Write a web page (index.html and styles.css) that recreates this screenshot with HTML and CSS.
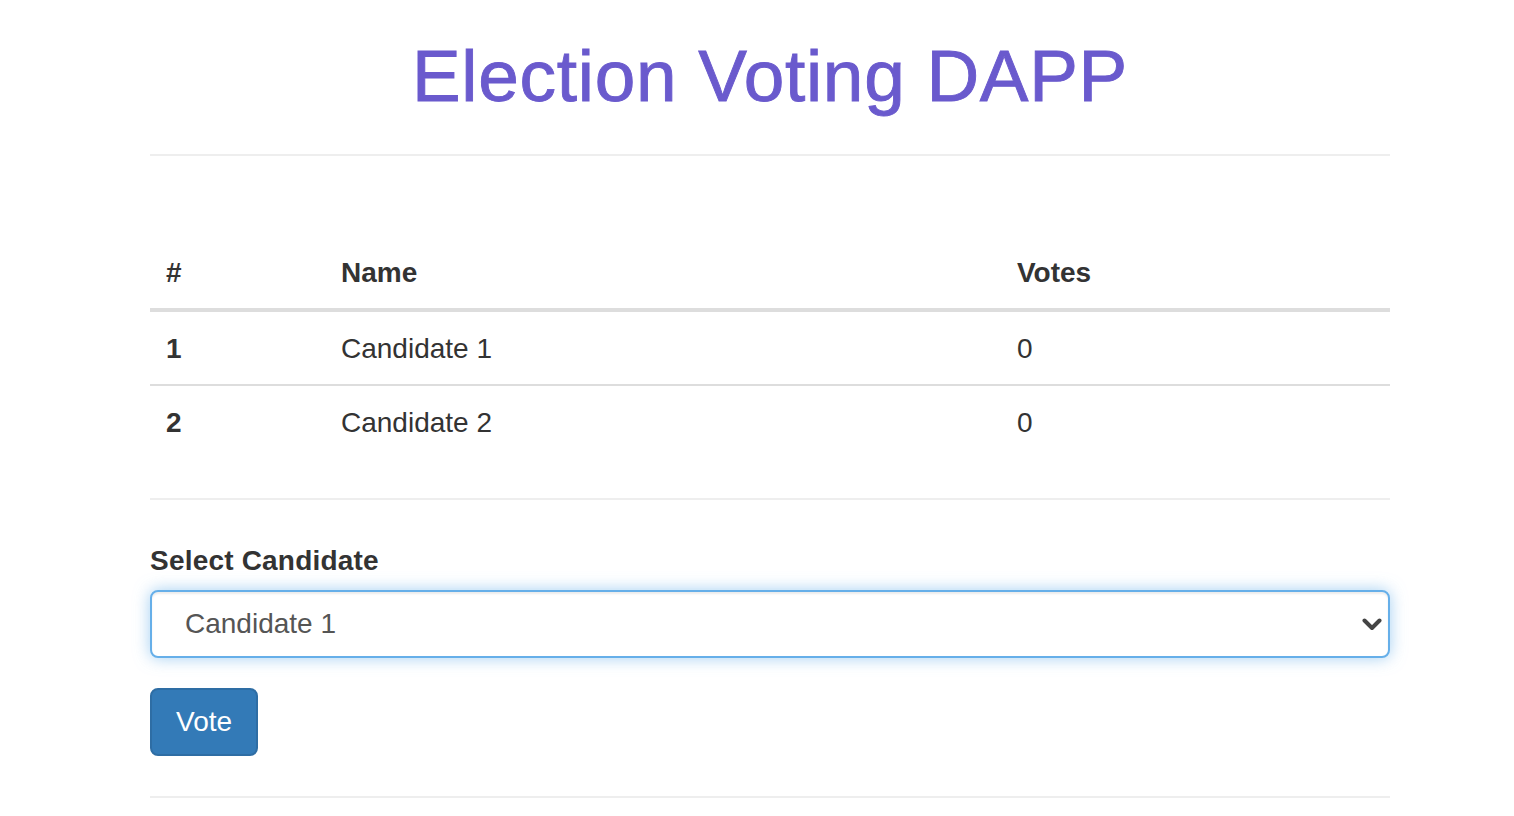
FILE: index.html
```html
<!DOCTYPE html>
<html lang="en">
<head>
<meta charset="utf-8">
<title>Election Voting DAPP</title>
<link rel="stylesheet" href="styles.css">
</head>
<body>
<div class="container">
  <h1 class="title">Election Voting DAPP</h1>
  <hr class="rule rule-title">
  <table class="table">
    <thead>
      <tr>
        <th class="col-id">#</th>
        <th class="col-name">Name</th>
        <th class="col-votes">Votes</th>
      </tr>
    </thead>
    <tbody>
      <tr>
        <th class="cell-id">1</th>
        <td>Candidate 1</td>
        <td>0</td>
      </tr>
      <tr class="row-next">
        <th class="cell-id">2</th>
        <td>Candidate 2</td>
        <td>0</td>
      </tr>
    </tbody>
  </table>
  <hr class="rule rule-table">
  <form class="vote-form">
    <div class="form-group">
      <label class="label" for="candidatesSelect">Select Candidate</label>
      <div class="select-wrap">
        <select class="form-control" id="candidatesSelect">
          <option>Candidate 1</option>
          <option>Candidate 2</option>
        </select>
        <svg class="chevron" width="20" height="14" viewBox="0 0 20 14" aria-hidden="true">
          <path d="M2.5 2.5 L10 10 L17.5 2.5" fill="none" stroke="#444" stroke-width="4" stroke-linecap="round" stroke-linejoin="round"/>
        </svg>
      </div>
    </div>
    <button type="button" class="btn">Vote</button>
  </form>
  <hr class="rule">
</div>
</body>
</html>
```

FILE: styles.css
```css
html, body {
  margin: 0;
  padding: 0;
  background: #fff;
}

body {
  font-family: "Liberation Sans", Helvetica, Arial, sans-serif;
  font-size: 28px;
  line-height: 40px;
  color: #333;
}

.container {
  margin-left: 150px;
  width: 1240px;
}

.title {
  margin: 36px 0 0 0;
  font-size: 73px;
  line-height: 80px;
  font-weight: 400;
  letter-spacing: 0.7px;
  text-align: center;
  color: #6a5acd;
  -webkit-text-stroke: 0.9px #6a5acd;
}

.rule {
  margin: 0 0 40px 0;
  height: 0;
  border: 0;
  border-top: 2px solid #eee;
}

.rule-title {
  margin-top: 38px;
  margin-bottom: 80px;
}

.rule-table {
  margin-bottom: 41px;
}

.table {
  width: 100%;
  border-collapse: collapse;
  border-spacing: 0;
  margin-bottom: 40px;
}

.table th,
.table td {
  padding: 17px 16px 15px 16px;
  line-height: 40px;
  text-align: left;
  vertical-align: top;
  font-size: 28px;
}

.table thead th {
  font-weight: 700;
  border-bottom: 4px solid #ddd;
}

.table tbody td {
  font-weight: 400;
}

.table .cell-id {
  font-weight: 700;
}

.row-next th,
.row-next td {
  border-top: 2px solid #ddd;
}

.col-id { width: 143px; }
.col-name { width: 644px; }

.form-group {
  margin-bottom: 30px;
}

.label {
  display: block;
  font-weight: 700;
  letter-spacing: 0.2px;
  margin-bottom: 9px;
}

.select-wrap {
  position: relative;
}

.form-control {
  display: block;
  box-sizing: border-box;
  width: 100%;
  height: 68px;
  margin: 0;
  padding: 0 60px 0 33px;
  font-family: "Liberation Sans", Helvetica, Arial, sans-serif;
  font-size: 28px;
  line-height: 40px;
  color: #555;
  background: #fff;
  border: 2px solid #66afe9;
  border-radius: 8px;
  outline: 0;
  -webkit-appearance: none;
  appearance: none;
  box-shadow: inset 0 2px 2px rgba(0, 0, 0, .075), 0 0 16px rgba(102, 175, 233, .6);
}

.chevron {
  position: absolute;
  right: 8px;
  top: 28px;
  pointer-events: none;
}

.btn {
  display: block;
  box-sizing: border-box;
  height: 68px;
  margin: 0 0 40px 0;
  padding: 12px 24px;
  font-family: "Liberation Sans", Helvetica, Arial, sans-serif;
  font-size: 28px;
  line-height: 40px;
  color: #fff;
  background: #337ab7;
  border: 2px solid #2e6da4;
  border-radius: 8px;
  cursor: pointer;
}
```
